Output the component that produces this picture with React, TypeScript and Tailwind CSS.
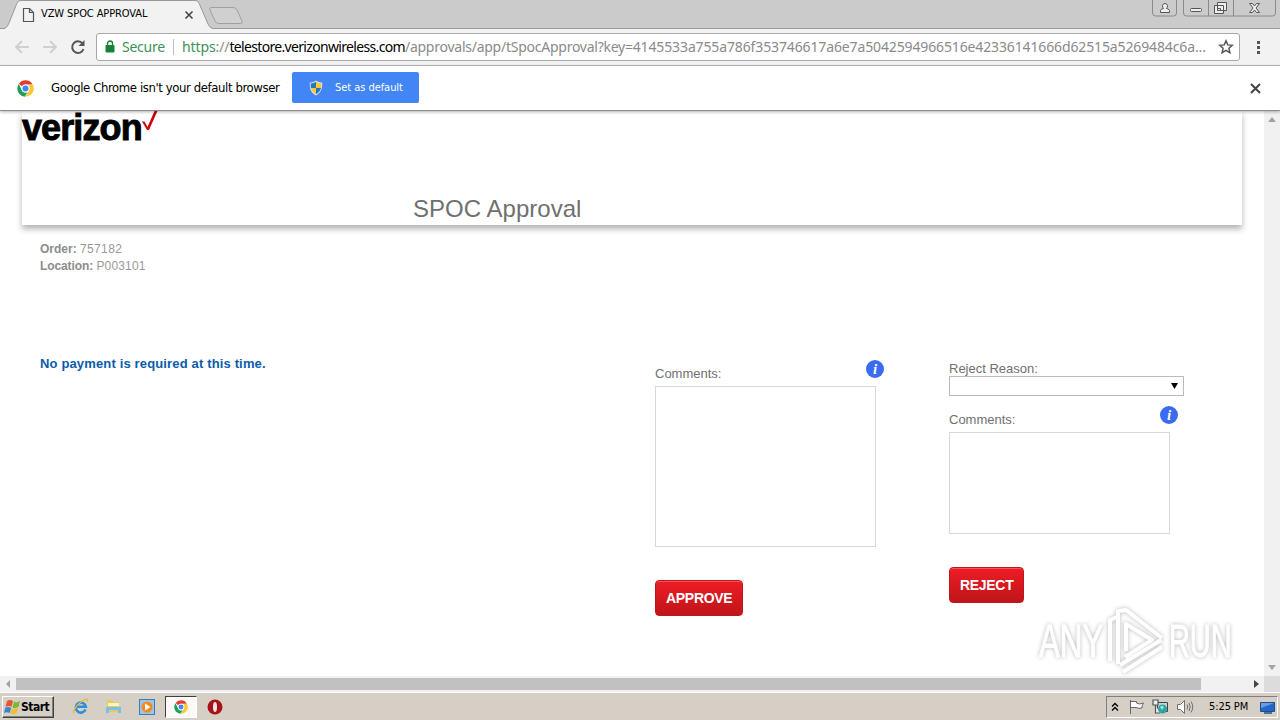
import type { ReactNode } from "react";

const TAHOMA = "font-['DejaVu_Sans_Condensed','DejaVu_Sans',sans-serif]";

function ChromeLogo({ size = 16 }: { size?: number }) {
  return (
    <svg width={size} height={size} viewBox="0 0 48 48">
      <circle cx="24" cy="24" r="23" fill="#fff" />
      <path d="M24 1a23 23 0 0 1 20 11.5H24A11.5 11.5 0 0 0 14 18.200L5.500 10.500A23 23 0 0 1 24 1z" fill="#e33b2e" />
      <path d="M44.500 13A23 23 0 0 1 23 47l10.500-17.500A11.500 11.500 0 0 0 31 14z" fill="#fcc934" />
      <path d="M5 11A23 23 0 0 0 22 47l8-13a11.500 11.500 0 0 1-16-4.500z" fill="#1fa05a" />
      <circle cx="24" cy="24" r="11" fill="#fff" />
      <circle cx="24" cy="24" r="8.500" fill="#4285f4" />
    </svg>
  );
}

function TabStrip() {
  return (
    <div className="relative flex h-[29px] shrink-0 bg-[#cbcbcb]">
      <svg className="absolute inset-0" width="1280" height="29" fill="none">
        <path d="M0 28.500H1280" stroke="#9a9a9a" />
        <path d="M0 28.500H4C7 28 8 25 9 23L17 3Q18 .5 21 .5H195Q198 .5 199 3L208 24Q210 28.500 213 28.500V30H0z" fill="#f2f2f2" />
        <path d="M0 28.500H4C7 28 8 25 9 23L17 3Q18 .5 21 .5H195Q198 .5 199 3L208 24Q210 28.500 213 28.500" stroke="#999" />
        <path d="M211 7.500H233Q236 7.500 237 10L242 21Q243 23.500 240 23.500H219Q216 23.500 215 21L210 10Q209 7.500 211 7.500z" stroke="#a0a0a0" fill="#d0d0d0" />
        <path d="M23.500 8.500h6l4 4v9h-10zM29.500 8.500v4h4" stroke="#555" strokeWidth="1.200" />
        <path d="M185.500 11.500l7 7m0-7l-7 7" stroke="#444" strokeWidth="1.600" />
      </svg>
      <span className={`relative ml-[41px] mt-[6px] text-[11px] leading-4 tracking-[-0.1px] whitespace-nowrap text-black ${TAHOMA}`}>
        VZW SPOC APPROVAL
      </span>
      <svg className="absolute right-0 top-0" width="130" height="20" fill="none" stroke="#8a8a8a">
        <path d="M2.500 0v13q0 3 3 3h18q3 0 3-3V0M33.500 0v13q0 3 3 3h86q3 0 3-3V0M58.500 0v16M83.500 0v16" />
        <g stroke="#555" fill="#eee">
          <path d="M10.500 12.500v-2q1-2 3-2-1-1-1-3 .5-2 2.500-2t2.500 2q0 2-1 3 2 0 3 2v2z" />
          <rect x="40.500" y="8.500" width="11" height="3" rx="1" />
          <path d="M67.500 2.500h9v8h-9zM64.500 5.500h9v8h-9z" />
          <path d="M67.500 8.500h3v2h-3z" />
          <path d="M99.500 3.500h3l2 2.500 2-2.500h3l-3.500 4.500 3.500 4.500h-3l-2-2.500-2 2.500h-3l3.500-4.500z" />
        </g>
      </svg>
    </div>
  );
}

function Toolbar() {
  return (
    <div className="flex h-[37px] shrink-0 items-center border-b border-[#b6b6b6] bg-[#f2f2f2]">
      <svg className="shrink-0" width="96" height="36" fill="none" strokeWidth="1.800">
        <path d="M29 18H16m6-6l-6 6 6 6M43 18h13m-6-6l6 6-6 6" stroke="#cfcfcf" />
        <path d="M82.500 14.500A5.800 5.800 0 1 0 83.500 20" stroke="#555" strokeWidth="2" />
        <path d="M84.500 11v6h-6z" fill="#555" />
      </svg>
      <div className="flex h-[28px] w-[1144px] shrink-0 items-center rounded-[3px] border border-[#a9a9a9] bg-white font-['Noto_Sans',sans-serif] text-[14px] leading-5">
        <svg className="ml-[8px] shrink-0" width="10" height="14" fill="none">
          <rect x="0.500" y="5" width="9" height="7.500" rx="1" fill="#188038" />
          <path d="M2.500 6V3.500a2.500 2.500 0 0 1 5 0V6" stroke="#188038" strokeWidth="1.400" />
        </svg>
        <span className="ml-[7px] w-[51px] shrink-0 tracking-[-0.25px] text-[#3d9158]">Secure</span>
        <span className="h-[16px] w-px shrink-0 bg-[#c0c0c0]" />
        <span className="ml-[8px] w-[1028px] shrink-0 whitespace-nowrap text-[#8a8a8a]">
          <span className="tracking-[-0.1px]"><span className="text-[#3d9158]">https</span>://</span>
          <span className="tracking-[-0.67px] text-black">telestore.verizonwireless.com</span>
          <span className="tracking-[-0.25px]">/approvals/app/tSpocApproval?key=</span>
          <span className="tracking-[-0.13px]">4145533a755a786f353746617a6e7a5042594966516e42336141666d62515a5269484c6a...</span>
        </span>
        <svg className="ml-[8px] shrink-0" width="16" height="16" viewBox="0 0 16 16" fill="none" stroke="#555" strokeWidth="1.500">
          <path d="M8 1.800l1.800 4.100 4.400.4-3.300 3 1 4.400L8 11.400l-3.900 2.300 1-4.400-3.300-3 4.400-.4z" />
        </svg>
      </div>
      <svg className="ml-[16px]" width="6" height="16" fill="#555">
        <path d="M1 2h3v3H1zM1 7h3v3H1zM1 12h3v3H1z" />
      </svg>
    </div>
  );
}

function InfoBar() {
  return (
    <div className={`relative z-10 flex h-[45px] shrink-0 items-center border-b border-[#8c8c8c] bg-white shadow-[0_1px_3px_rgba(0,0,0,0.3)] ${TAHOMA}`}>
      <div className="ml-[17px]"><ChromeLogo size={17} /></div>
      <span className="ml-[17px] w-[241px] whitespace-nowrap text-[13px] tracking-[-0.4px] text-black">
        Google Chrome isn't your default browser
      </span>
      <button className="mb-px flex h-[31px] w-[127px] items-center rounded-[2px] bg-[#4285f4] text-[11px] text-white">
        <svg className="ml-[17px]" width="14" height="16" viewBox="0 0 14 16">
          <path d="M7 .5C5 2 3 2.500 .8 2.500 .5 8 1.500 12.500 7 15.500 12.500 12.500 13.500 8 13.200 2.500 11 2.500 9 2 7 .5z" fill="#d9e3ee" />
          <path d="M7 1.800V8H2Q1.500 6 1.800 3.500 5 3.300 7 1.800zM7 8h5q-1 4-5 6.300z" fill="#2f76b8" />
          <path d="M7 1.800V8h5q.5-2 .2-4.500Q9 3.300 7 1.800zM7 8H2q1 4 5 6.300z" fill="#f3c93a" />
        </svg>
        <span className="ml-[12px] whitespace-nowrap pt-[2px] tracking-[-0.05px]">Set as default</span>
      </button>
      <svg className="ml-auto mr-[19px]" width="11" height="11" stroke="#444" strokeWidth="2">
        <path d="M1 1l9 9m0-9l-9 9" />
      </svg>
    </div>
  );
}

function InfoIcon() {
  return (
    <span className="flex size-[18px] items-center justify-center rounded-full bg-[#3a6bf0] font-['Liberation_Serif',serif] text-[15px] font-bold italic leading-none text-white">
      i
    </span>
  );
}

function RedButton({ children }: { children: ReactNode }) {
  return (
    <button className="h-[36px] rounded-[4px] border border-[#c1151b] bg-linear-to-b from-[#ee1c25] to-[#bf1519] px-[10px] text-[14px] font-bold leading-none tracking-[-0.3px] text-white shadow-[inset_0_1px_0_rgba(255,255,255,0.25)]">
      {children}
    </button>
  );
}

function PageContent() {
  return (
    <div className="relative flex-1 overflow-hidden bg-white font-['Liberation_Sans',sans-serif] text-[13px] text-[#707070]">
      <header className="ml-[22px] h-[114px] w-[1220px] bg-white shadow-[0_4px_6px_rgba(0,0,0,0.3)]">
        <div className="flex h-[84px]">
          <span className="h-[34px] w-[120px] whitespace-nowrap text-[36px] font-bold leading-[34px] tracking-[-0.9px] text-black [-webkit-text-stroke:0.9px_#000]">
            verizon
          </span>
          <svg width="17" height="22" viewBox="0 0 17 22">
            <path d="M0 10.500h2.500l3 5.500L12.500 0H15.500L7 19H5z" fill="#cd040b" />
          </svg>
        </div>
        <h1 className="pl-[391px] text-[24px] leading-[28px] tracking-[0.03px]">SPOC Approval</h1>
      </header>

      <div className="ml-[40px] mt-[16px] text-[12px] leading-[17px] text-[#999]">
        <p><b className="text-[#8c8c8c]">Order:</b> <span className="tracking-[0.35px]">757182</span></p>
        <p><b className="tracking-[-0.1px] text-[#8c8c8c]">Location:</b> <span className="tracking-[0.15px]">P003101</span></p>
      </div>

      <div className="ml-[40px] mt-[80px] flex">
        <p className="w-[615px] text-[13px] font-bold leading-[17px] tracking-[0.15px] text-[#0b5baa]">
          No payment is required at this time.
        </p>
        <section className="w-[294px] pt-[4px]">
          <div className="flex h-[27px] w-[229px] justify-between pt-[1px]">
            <label className="pt-[6px] leading-[15px]">Comments:</label>
            <InfoIcon />
          </div>
          <textarea className="mb-[33px] block h-[161px] w-[221px] resize-none border border-[#d8d8d8]" />
          <RedButton>APPROVE</RedButton>
        </section>
        <section className="pt-[6px]">
          <label className="block h-[15px] leading-[15px]">Reject Reason:</label>
          <div className="flex h-[20px] w-[235px] items-center justify-end border border-[#bbb] pr-[5px]">
            <svg width="7" height="6"><path d="M0 0h7L3.500 6z" fill="#000" /></svg>
          </div>
          <div className="flex h-[36px] w-[229px] justify-between pt-[10px]">
            <label className="pt-[6px] leading-[15px]">Comments:</label>
            <InfoIcon />
          </div>
          <textarea className="mb-[33px] block h-[102px] w-[221px] resize-none border border-[#d8d8d8]" />
          <RedButton>REJECT</RedButton>
        </section>
      </div>

      {/* watermark */}
      <div className="absolute left-[1039px] top-[496px] flex items-center drop-shadow-[0_0_2px_rgba(0,0,0,0.28)]">
        <span className="w-[66px] origin-left scale-x-[0.68] text-[46px] leading-none text-white [-webkit-text-stroke:1px_#fff]">ANY</span>
        <svg width="62" height="68" viewBox="0 0 62 68" fill="none" stroke="#fff" strokeWidth="4" strokeLinejoin="round">
          <path d="M5 54V13l7-3M13 57V4l8-1L57 31M21 44V17l26 16-27 17M15 58l41-25M18 65l39-25" />
        </svg>
        <span className="w-[66px] origin-left scale-x-[0.63] pl-[3px] text-[46px] leading-none text-white [-webkit-text-stroke:1px_#fff]">RUN</span>
      </div>
    </div>
  );
}

function Taskbar() {
  return (
    <div className={`flex h-[28px] shrink-0 items-center border-t border-white bg-[#d6cfc6] text-[11px] text-black ${TAHOMA}`}>
      <div className="ml-[2px] flex h-[22px] w-[52px] items-center border border-b-[#404040] border-l-white border-r-[#404040] border-t-white shadow-[inset_-1px_-1px_0_#808080]">
        <svg className="ml-px" width="17" height="16" viewBox="0 0 17 16">
          <path d="M3 2q3-2 6 0L7.500 8Q5 6 1.500 8z" fill="#e8552b" />
          <path d="M10 2.500q3 1.500 6-.5l-1.500 6Q11 10 8.500 8.500z" fill="#7bb83a" />
          <path d="M1.200 9q3-2 6 0l-1.500 5Q3 12.500 0 14z" fill="#3a83cf" />
          <path d="M8.200 9.500q3 1.500 6-.5l-1.500 5q-3 2-6 .5z" fill="#f4bd2c" />
        </svg>
        <span className="text-[12px] font-bold tracking-[-0.5px]">Start</span>
      </div>

      <svg className="ml-[18px]" width="17" height="17" viewBox="0 0 17 17" fill="none">
        <path d="M13.500 11.500A5 5 0 1 1 13.800 8.800H5" stroke="#2c8fdc" strokeWidth="2.600" />
        <path d="M2 14.500C-.5 16 3.500 8 9 4s8-3.500 6-.5" stroke="#e9b93c" strokeWidth="1.400" />
      </svg>
      <svg className="ml-[16px]" width="17" height="17" viewBox="0 0 17 17">
        <path d="M2 2h5l1 2h6v10H2z" fill="#e9c866" />
        <path d="M3 5h11v3H3z" fill="#fff3bd" />
        <path d="M1 9h15v6h-3v-3H4v3H1z" fill="#79c0e4" />
      </svg>
      <svg className="ml-[17px]" width="16" height="16" viewBox="0 0 16 16">
        <rect x=".5" y=".5" width="15" height="15" fill="#9cc4e8" stroke="#3c7db8" />
        <circle cx="8" cy="8" r="5.500" fill="#f58a1f" />
        <path d="M6 4.500v7L11.500 8z" fill="#fff" />
      </svg>
      <div className="ml-[10px] flex h-[22px] w-[32px] items-center justify-center border border-b-white border-l-[#404040] border-r-white border-t-[#404040] bg-[#fbfaf8]">
        <ChromeLogo size={14} />
      </div>
      <svg className="ml-[10px]" width="16" height="16" viewBox="0 0 16 16">
        <circle cx="8" cy="8" r="7.500" fill="#a81218" />
        <ellipse cx="8" cy="8" rx="2" ry="5" fill="#f4e7e5" />
      </svg>

      <div className="ml-auto mr-[2px] flex h-[22px] w-[172px] items-center border border-b-white border-l-[#808080] border-r-white border-t-[#808080]">
        <svg className="ml-[4px]" width="8" height="10" fill="none" stroke="#000" strokeWidth="1.300">
          <path d="M1 4.500l3-3 3 3M1 8.500l3-3 3 3" />
        </svg>
        <svg className="ml-[9px]" width="17" height="16" fill="#fff" stroke="#666">
          <path d="M2.500 1v14M2.500 2.500h6v1.500q3 2 7 0-2 3-1.500 5-3 1-6-.5h-5.500z" />
        </svg>
        <svg className="ml-[7px]" width="17" height="16">
          <path d="M5.500 3.500h10v9h-10z" fill="#b9d6dd" stroke="#444" />
          <path d="M1 1h5v5H1zM3.500 6v8H8" fill="#eee" stroke="#555" strokeWidth="1.200" />
          <circle cx="10.500" cy="10" r="4.500" fill="#2fa3a3" />
          <path d="M8 8q2-2 4 0l-2 3z" fill="#a5e3d6" />
        </svg>
        <svg className="ml-[8px]" width="17" height="16" fill="none" stroke="#707070">
          <path d="M.5 5.500h3l4-4v13l-4-4h-3z" fill="#fff" />
          <path d="M10 5.500q1.500 2.500 0 5M12 4q2.500 4 0 8M14 2.500q3.500 5.500 0 11" />
        </svg>
        <span className="ml-[15px] w-[41px] whitespace-nowrap pt-[2px] tracking-[-0.1px]">5:25 PM</span>
        <svg className="ml-[10px]" width="16" height="16">
          <path d="M.5 3.500h14v9H.5z" fill="#2268c8" stroke="#244b82" />
          <path d="M1 4h13L1 9z" fill="#639fe7" />
          <path d="M4 14h8" stroke="#547092" strokeWidth="2" />
        </svg>
      </div>
    </div>
  );
}

export default function App() {
  return (
    <div className="flex h-[720px] w-[1280px] flex-col overflow-hidden bg-white">
      <TabStrip />
      <Toolbar />
      <InfoBar />
      <div className="flex h-[565px] shrink-0">
        <PageContent />
        <div className="flex w-[16px] flex-col items-center justify-between bg-[#f1f1f1] py-[6px]">
          <svg width="8" height="5"><path d="M0 5h8L4 0z" fill="#a3a3a3" /></svg>
          <svg width="8" height="5"><path d="M0 0h8L4 5z" fill="#a3a3a3" /></svg>
        </div>
      </div>
      <div className="flex h-[16px] shrink-0 items-center bg-[#f1f1f1]">
        <svg className="ml-[6px] mr-[6px]" width="4" height="8"><path d="M4 0v8L0 4z" fill="#a3a3a3" /></svg>
        <div className="h-[12px] w-[1185px] bg-[#c1c1c1]" />
        <svg className="ml-[53px]" width="5" height="8"><path d="M0 0v8l5-4z" fill="#444" /></svg>
        <div className="ml-auto h-full w-[16px] bg-[#dcdcdc]" />
      </div>
      <Taskbar />
    </div>
  );
}
